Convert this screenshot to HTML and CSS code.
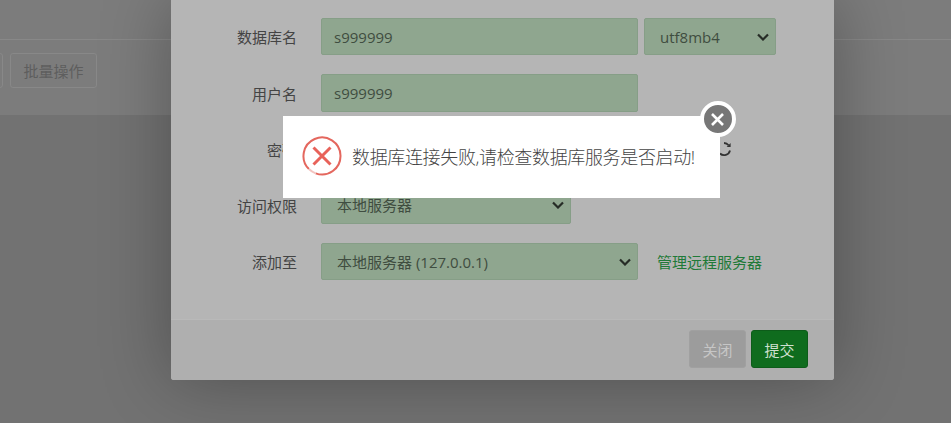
FILE: index.html
```html
<!DOCTYPE html>
<html lang="zh-CN">
<head>
  <meta charset="UTF-8">
  <meta name="viewport" content="width=device-width, initial-scale=1.0">
  <title>添加数据库</title>
  <link rel="stylesheet" href="styles.css">
</head>
<body>
  <div class="page">
    <div class="topbar"></div>
    <div class="toolbar">
      <button class="tool-btn tool-btn-cut" type="button"></button>
      <button class="tool-btn" type="button">批量操作</button>
    </div>
  </div>

  <div class="modal">
    <form class="modal-body">
      <div class="form-group">
        <label>数据库名</label>
        <input class="field field-wide" type="text" value="s999999">
        <select class="field field-charset"><option>utf8mb4</option></select>
      </div>
      <div class="form-group form-group-tall">
        <label>用户名</label>
        <input class="field field-wide" type="text" value="s999999">
      </div>
      <div class="form-group form-group-short">
        <label>密码</label>
        <input class="field field-wide" type="text" value="">
        <svg class="refresh" width="14" height="16" viewBox="0 0 14 16">
          <path d="M7 2A6 6 0 0 1 11.6 4.2M13 9.5A6 6 0 0 1 3 12.5" fill="none" stroke="#333" stroke-width="1.8"/>
          <path d="M9.6 6h4V2z" fill="#333"/>
        </svg>
      </div>
      <div class="form-group form-group-tall">
        <label>访问权限</label>
        <select class="field field-mid"><option>本地服务器</option></select>
      </div>
      <div class="form-group">
        <label>添加至</label>
        <select class="field field-wide"><option>本地服务器 (127.0.0.1)</option></select>
        <a class="manage-link" href="#">管理远程服务器</a>
      </div>
    </form>
    <div class="modal-footer">
      <button class="btn btn-close" type="button">关闭</button>
      <button class="btn btn-submit" type="button">提交</button>
    </div>
  </div>

  <div class="alert">
    <svg class="alert-icon" width="40" height="40" viewBox="0 0 40 40">
      <path d="M6.92 33.08A18.5 18.5 0 1 1 13.67 37.38" fill="none" stroke="#e4675e" stroke-width="2"/>
      <path d="M6.92 33.08A18.5 18.5 0 0 0 13.67 37.38" fill="none" stroke="#f3c4c0" stroke-width="2"/>
      <path d="M11.5 11.5L28.5 28.5M28.5 11.5L11.5 28.5" fill="none" stroke="#e8625a" stroke-width="3"/>
    </svg>
    <span class="alert-text">数据库连接失败,请检查数据库服务是否启动!</span>
    <div class="alert-close">
      <svg width="16" height="16" viewBox="0 0 16 16">
        <path d="M2 3L13 14M13 3L2 14" fill="none" stroke="#fff" stroke-width="2.6"/>
      </svg>
    </div>
  </div>
</body>
</html>
```

FILE: styles.css
```css
* {
  box-sizing: border-box;
}

body {
  margin: 0;
  height: 423px;
  overflow: hidden;
  background-color: #727272;
  font-family: "Open Sans", "Noto Sans CJK SC", sans-serif;
  font-size: 15px;
}

.page {
  width: 100%;
}

.topbar {
  height: 40px;
  background-color: #7c7c7c;
  border-bottom: 1px solid #888;
}

.toolbar {
  height: 75px;
  padding-top: 13px;
  display: flex;
  gap: 7px;
  background-color: #7c7c7c;
  margin-left: -11px;
}

.tool-btn {
  width: 87px;
  height: 35px;
  padding: 0;
  font-family: inherit;
  font-size: 15px;
  color: #5e5e5e;
  background-color: #7c7c7c;
  border: 1px solid #888;
  border-radius: 3px;
}

.tool-btn-cut {
  width: 14px;
}

.modal {
  position: absolute;
  left: 171px;
  top: 0;
  width: 663px;
  height: 380px;
  display: flex;
  flex-direction: column;
  background-color: #b5b5b5;
  border-radius: 0 0 3px 3px;
  box-shadow: 0 0 70px rgba(0, 0, 0, 0.3);
}

.modal-body {
  flex: 1;
  padding-top: 18px;
  display: flex;
  flex-direction: column;
  gap: 19px;
}

.form-group {
  height: 37px;
  display: flex;
  align-items: center;
}

.form-group-tall {
  height: 38px;
}

.form-group-short {
  height: 36px;
}

.form-group label {
  width: 126px;
  margin-right: 24px;
  text-align: right;
  color: #444;
}

.field {
  height: 100%;
  font-family: inherit;
  font-size: 15px;
  color: #3f4d40;
  background-color: #8fa68f;
  border: 1px solid #869e87;
  border-radius: 2px;
  outline: none;
}

input.field {
  padding: 0 12px;
}

select.field {
  padding: 0 4px 0 15px;
  appearance: none;
  background-image: url("data:image/svg+xml,%3Csvg xmlns='http://www.w3.org/2000/svg' width='12' height='8'%3E%3Cpath d='M1 1.5l5 5 5-5' fill='none' stroke='%23262c26' stroke-width='2.2'/%3E%3C/svg%3E");
  background-repeat: no-repeat;
  background-position: right 6px center;
}

.field-wide {
  width: 317px;
}

.field-mid {
  width: 250px;
}

.field-charset {
  width: 132px;
  margin-left: 6px;
}

.refresh {
  position: absolute;
  left: 546px;
  top: 141px;
}

.manage-link {
  margin-left: 19px;
  color: #1f7a38;
  text-decoration: none;
}

.modal-footer {
  height: 61px;
  padding: 10px 26px 0 0;
  display: flex;
  justify-content: flex-end;
  gap: 5px;
  background-color: #afafaf;
  border-top: 1px solid #b9b9b9;
  border-radius: 0 0 3px 3px;
}

.btn {
  width: 57px;
  height: 38px;
  font-family: inherit;
  font-size: 15px;
  border-radius: 3px;
}

.btn-close {
  color: #c6c6c6;
  background-color: #9c9c9c;
  border: 1px solid #a0a0a0;
}

.btn-submit {
  color: #cfe0d0;
  background-color: #0f6c1e;
  border: 1px solid #0d5c1a;
}

.alert {
  position: absolute;
  left: 283px;
  top: 116px;
  width: 437px;
  height: 82px;
  padding-left: 19px;
  display: flex;
  align-items: center;
  gap: 10px;
  background-color: #fff;
}

.alert-icon {
  margin-top: -2px;
}

.alert-text {
  font-size: 18px;
  font-weight: 300;
  letter-spacing: -0.35px;
  margin-top: -2px;
  color: #444;
}

.alert-close {
  position: absolute;
  right: -16px;
  top: -15px;
  width: 36px;
  height: 36px;
  display: flex;
  align-items: center;
  justify-content: center;
  background-color: #777;
  border: 4px solid #fff;
  border-radius: 50%;
}
```
